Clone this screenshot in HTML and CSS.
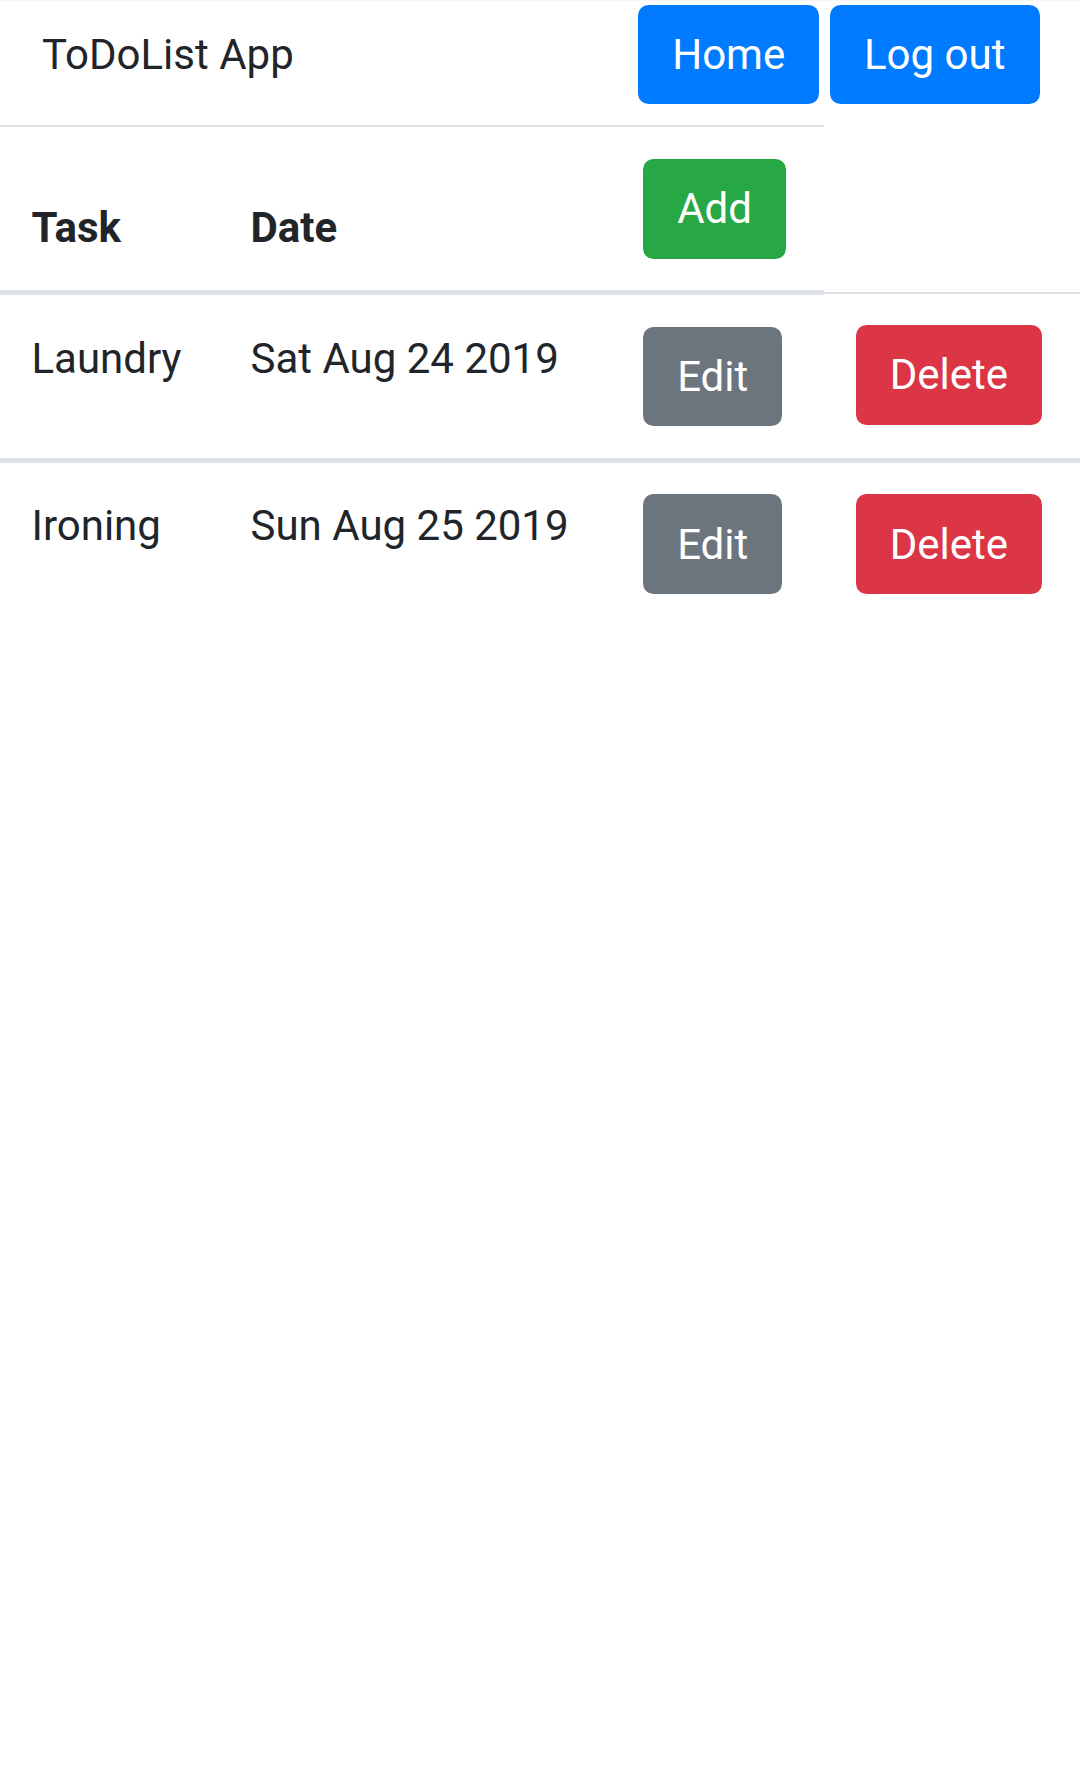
FILE: index.html
```html
<!DOCTYPE html>
<html lang="en">
<head>
<meta charset="utf-8">
<title>ToDoList App</title>
<link rel="stylesheet" href="styles.css">
</head>
<body>
  <nav class="navbar">
    <span class="brand">ToDoList App</span>
    <div class="nav-actions">
      <a class="btn btn-primary" href="#">Home</a>
      <a class="btn btn-primary" href="#">Log out</a>
    </div>
  </nav>
  <table class="table">
    <colgroup>
      <col class="col-task">
      <col class="col-date">
      <col class="col-edit">
      <col class="col-delete">
    </colgroup>
    <thead>
      <tr>
        <th>Task</th>
        <th>Date</th>
        <th><a class="btn btn-success" href="#">Add</a></th>
      </tr>
    </thead>
    <tbody>
      <tr>
        <td>Laundry</td>
        <td>Sat Aug 24 2019</td>
        <td><a class="btn btn-secondary" href="#">Edit</a></td>
        <td><button class="btn btn-danger" type="button">Delete</button></td>
      </tr>
    </tbody>
    <tbody>
      <tr>
        <td>Ironing</td>
        <td>Sun Aug 25 2019</td>
        <td><a class="btn btn-secondary" href="#">Edit</a></td>
        <td><button class="btn btn-danger" type="button">Delete</button></td>
      </tr>
    </tbody>
  </table>
</body>
</html>
```
FILE: styles.css
```css
html, body {
  margin: 0;
  padding: 0;
  background: #ffffff;
}

body {
  font-family: Roboto, "Liberation Sans", Arial, sans-serif;
  font-size: 42px;
  line-height: 63px;
  color: #212529;
  min-height: 1777px;
  border-top: 1px solid #f6f6f6;
  box-sizing: border-box;
}

.navbar {
  display: flex;
  align-items: center;
  justify-content: space-between;
  padding: 3.5px 40.5px 21px 42px;
}

.brand {
  font-size: 42px;
  line-height: 63px;
  color: #212529;
}

.nav-actions {
  display: flex;
  gap: 10.5px;
}

.btn {
  display: inline-block;
  font-family: inherit;
  font-size: 42px;
  line-height: 63px;
  font-weight: 400;
  padding: 18.375px 34.125px;
  border: 0;
  border-radius: 10.5px;
  color: #ffffff;
  text-decoration: none;
  vertical-align: top;
  cursor: pointer;
}

.btn-primary { background: #007bff; }
.btn-success { background: #28a745; }
.btn-secondary { background: #6c757d; }
.btn-danger { background: #dc3545; }

.table {
  width: 1080px;
  border-collapse: collapse;
  table-layout: fixed;
}

.col-task { width: 219px; }
.col-date { width: 392.5px; }
.col-edit { width: 212.5px; }
.col-delete { width: 256px; }

.table th,
.table td {
  padding: 31.5px;
  text-align: left;
  vertical-align: top;
  border-top: 2.625px solid #dee2e6;
  white-space: nowrap;
}

.table th {
  font-weight: 700;
  vertical-align: bottom;
  border-bottom: 5.25px solid #dee2e6;
}

.table tbody + tbody {
  border-top: 5.25px solid #dee2e6;
}
```
